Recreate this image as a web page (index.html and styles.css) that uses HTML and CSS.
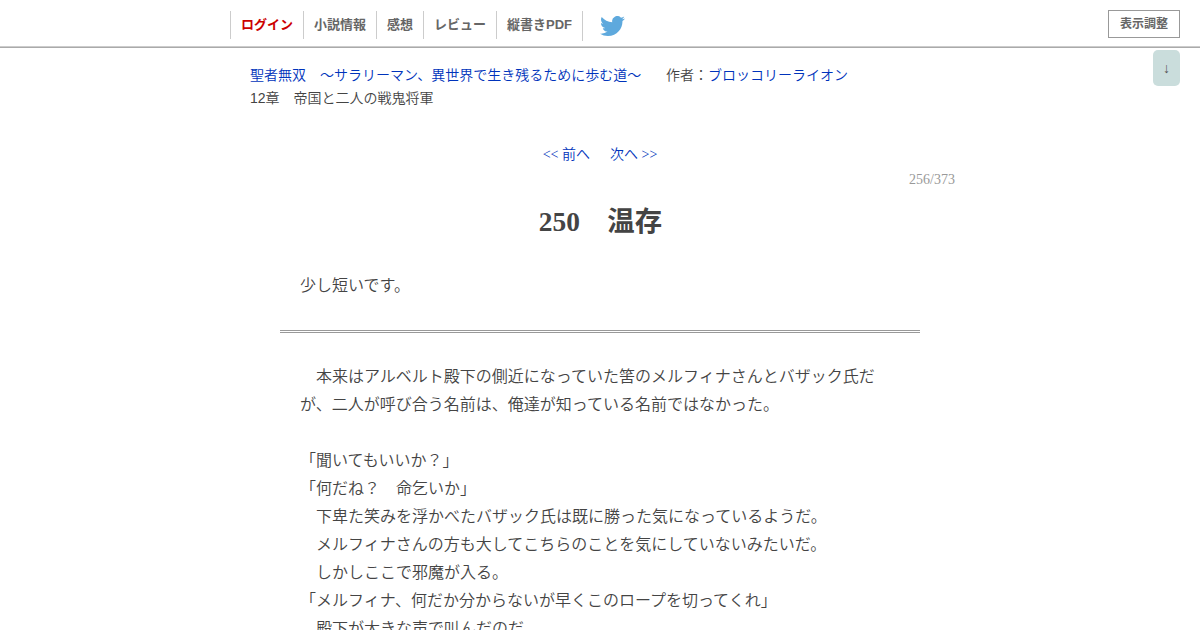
FILE: index.html
```
<!DOCTYPE html>
<html lang="ja">
<head>
    <meta charset="UTF-8">
    <meta name="viewport" content="width=device-width, initial-scale=1.0">
    <title>聖者無双 - 250　温存</title>
    <link rel="stylesheet" href="styles.css">
</head>
<body>
    <header class="novel-header">
        <ul class="head-nav">
            <li><a class="login" href="#">ログイン</a></li>
            <li><a href="#">小説情報</a></li>
            <li><a href="#">感想</a></li>
            <li><a href="#">レビュー</a></li>
            <li class="pdf"><a href="#">縦書きPDF</a></li>
        </ul>
        <a class="twitter" href="#" aria-label="Twitter">
            <svg viewBox="0 2.2 24 19.6" preserveAspectRatio="none"><path d="M23.953 4.57a10 10 0 01-2.825.775 4.958 4.958 0 002.163-2.723c-.951.555-2.005.959-3.127 1.184a4.92 4.92 0 00-8.384 4.482C7.69 8.095 4.067 6.13 1.64 3.162a4.822 4.822 0 00-.666 2.475c0 1.71.87 3.213 2.188 4.096a4.904 4.904 0 01-2.228-.616v.06a4.923 4.923 0 003.946 4.827 4.996 4.996 0 01-2.212.085 4.936 4.936 0 004.604 3.417 9.867 9.867 0 01-6.102 2.105c-.39 0-.779-.023-1.17-.067a13.995 13.995 0 007.557 2.209c9.053 0 13.998-7.496 13.998-13.985 0-.21 0-.42-.015-.63A9.935 9.935 0 0024 4.59z"/></svg>
        </a>
        <button class="display-btn">表示調整</button>
    </header>
    <a class="scroll-down" href="#">↓</a>

    <div class="contents1">
        <a href="#">聖者無双　～サラリーマン、異世界で生き残るために歩む道～</a>
        <span class="author">作者：<a href="#">ブロッコリーライオン</a></span>
        <p class="chapter">12章　帝国と二人の戦鬼将軍</p>
    </div>

    <main class="novel">
        <div class="novel-bn">
            <a href="#">&lt;&lt; 前へ</a>
            <a href="#">次へ &gt;&gt;</a>
        </div>
        <div class="novel-no">256/373</div>
        <h1 class="subtitle">250　温存</h1>
        <div class="preface">少し短いです。</div>
        <div class="honbun">
            <p>　本来はアルベルト殿下の側近になっていた筈のメルフィナさんとバザック氏だが、二人が呼び合う名前は、俺達が知っている名前ではなかった。</p>
            <p><br></p>
            <p>「聞いてもいいか？」</p>
            <p>「何だね？　命乞いか」</p>
            <p>　下卑た笑みを浮かべたバザック氏は既に勝った気になっているようだ。</p>
            <p>　メルフィナさんの方も大してこちらのことを気にしていないみたいだ。</p>
            <p>　しかしここで邪魔が入る。</p>
            <p>「メルフィナ、何だか分からないが早くこのロープを切ってくれ」</p>
            <p>　殿下が大きな声で叫んだのだ。</p>
        </div>
    </main>
</body>
</html>
```
FILE: styles.css
```
* {
    box-sizing: border-box;
}

html {
    overflow: hidden;
}

body {
    margin: 0;
    height: 630px;
    overflow: hidden;
    background: #fff;
    color: #444;
    font-family: "Liberation Sans", "Noto Sans CJK JP", sans-serif;
    font-size: 14px;
    font-weight: 350;
}

a {
    color: #03b;
    text-decoration: none;
}

p {
    margin: 0;
}

.novel-header {
    display: flex;
    align-items: flex-start;
    height: 48px;
    padding: 11px 20px 0 230px;
    border-bottom: 1px solid #aaa;
    box-shadow: inset 0 -1px 0 #ccc;
}

.head-nav {
    display: flex;
    margin: 0;
    padding: 0;
    list-style: none;
}

.head-nav li {
    height: 28px;
    padding: 0 10px;
    border-right: 1px solid #ccc;
    font-size: 13px;
    font-weight: bold;
    line-height: 27px;
}

.head-nav li:first-child {
    border-left: 1px solid #ccc;
}

.head-nav .pdf {
    height: 30px;
}

.head-nav a {
    color: #666;
}

.head-nav .login {
    color: #c00;
}

.twitter {
    margin: 5px 0 0 17px;
}

.twitter svg {
    display: block;
    width: 25px;
    height: 20px;
    fill: #5ea9dd;
}

.display-btn {
    width: 72px;
    height: 28px;
    margin: -1px 0 0 auto;
    padding: 0 0 4px;
    border: 1px solid #999;
    background: #fff;
    color: #666;
    font-family: inherit;
    font-size: 12px;
    font-weight: bold;
}

.scroll-down {
    position: absolute;
    top: 50px;
    right: 20px;
    width: 27px;
    height: 36px;
    border-radius: 5px;
    background: #cadddc;
    color: #555;
    line-height: 36px;
    text-align: center;
}

.contents1 {
    width: 700px;
    margin: 16px auto 0;
    line-height: 23px;
}

.author {
    margin-left: 21px;
}

.novel {
    width: 730px;
    margin: 32px auto 0;
    font-family: "Liberation Serif", "Noto Sans CJK JP", serif;
}

.novel-bn {
    display: flex;
    justify-content: center;
    gap: 20px;
    line-height: 25px;
}

.novel-no {
    padding-right: 10px;
    color: #999;
    line-height: 25px;
    text-align: right;
}

.subtitle {
    margin: 10px 0 0;
    padding-left: 1px;
    font-size: 27.4px;
    font-weight: bold;
    line-height: 40px;
    text-align: center;
}

.preface {
    width: 640px;
    margin: 30px auto 0;
    padding: 0 20px 30px;
    border-bottom: 3px double #999;
    font-size: 16px;
    line-height: 28px;
}

.honbun {
    width: 600px;
    margin: 30px auto 0;
    font-size: 16px;
    line-height: 28px;
}
```
